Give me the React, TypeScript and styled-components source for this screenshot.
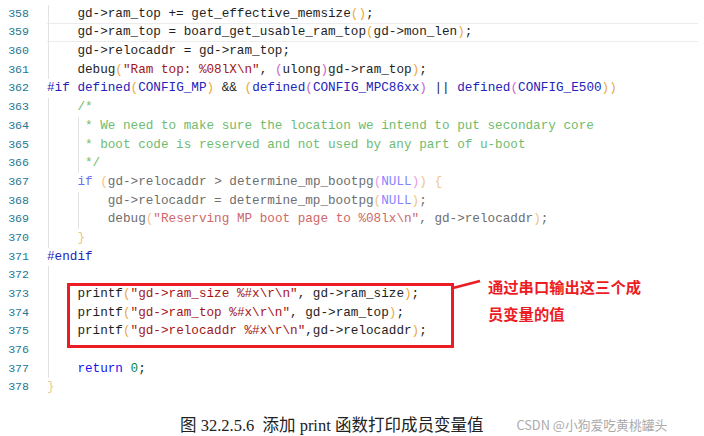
import React from "react";
import styled, { createGlobalStyle } from "styled-components";

const Global = createGlobalStyle`
  html, body { margin: 0; padding: 0; background: #ffffff; }
  body { width: 704px; height: 436px; overflow: hidden; }
`;

type Kind =
  | "t" | "kw" | "pp" | "str" | "num" | "p1" | "p2"
  | "cm" | "it" | "ikw" | "istr" | "inull" | "ip1" | "ip2" | "end";

const colors: Record<Kind, string> = {
  t: "#1e1e1e",
  kw: "#1414f0",
  pp: "#2323b8",
  str: "#a31515",
  num: "#098658",
  p1: "#e9a940",
  p2: "#cf62cf",
  cm: "#6fbb6f",
  it: "#6e6e6e",
  ikw: "#6f6ff0",
  istr: "#cf6767",
  inull: "#8585ff",
  ip1: "#f0c48a",
  ip2: "#e79be7",
  end: "#e4d197",
};

type Tok = [string, Kind];
interface Line {
  n: number;
  toks: Tok[];
  guides: number[];
  current?: boolean;
}

const lines: Line[] = [
  { n: 358, guides: [0], toks: [["    gd->ram_top += get_effective_memsize", "t"], ["()", "p1"], [";", "t"]] },
  { n: 359, guides: [0], current: true, toks: [["    gd->ram_top = board_get_usable_ram_top", "t"], ["(", "p1"], ["gd->mon_len", "t"], [")", "p1"], [";", "t"]] },
  { n: 360, guides: [0], toks: [["    gd->relocaddr = gd->ram_top;", "t"]] },
  { n: 361, guides: [0], toks: [["    debug", "t"], ["(", "p1"], ["\"Ram top: %08lX\\n\"", "str"], [", ", "t"], ["(", "p2"], ["ulong", "t"], [")", "p2"], ["gd->ram_top", "t"], [")", "p1"], [";", "t"]] },
  { n: 362, guides: [], toks: [["#if defined", "pp"], ["(", "p1"], ["CONFIG_MP", "pp"], [")", "p1"], [" && ", "t"], ["(", "p1"], ["defined", "pp"], ["(", "p2"], ["CONFIG_MPC86xx", "pp"], [")", "p2"], [" || ", "t"], ["defined", "pp"], ["(", "p2"], ["CONFIG_E500", "pp"], ["))", "p1"]] },
  { n: 363, guides: [0], toks: [["    /*", "cm"]] },
  { n: 364, guides: [0, 4], toks: [["     * We need to make sure the location we intend to put secondary core", "cm"]] },
  { n: 365, guides: [0, 4], toks: [["     * boot code is reserved and not used by any part of u-boot", "cm"]] },
  { n: 366, guides: [0, 4], toks: [["     */", "cm"]] },
  { n: 367, guides: [0], toks: [["    ", "it"], ["if", "ikw"], [" ", "it"], ["(", "ip1"], ["gd->relocaddr > determine_mp_bootpg", "it"], ["(", "ip2"], ["NULL", "inull"], [")", "ip2"], [")", "ip1"], [" ", "it"], ["{", "ip1"]] },
  { n: 368, guides: [0, 4], toks: [["        gd->relocaddr = determine_mp_bootpg", "it"], ["(", "ip1"], ["NULL", "inull"], [")", "ip1"], [";", "it"]] },
  { n: 369, guides: [0, 4], toks: [["        debug", "it"], ["(", "ip1"], ["\"Reserving MP boot page to %08lx\\n\"", "istr"], [", gd->relocaddr", "it"], [")", "ip1"], [";", "it"]] },
  { n: 370, guides: [0], toks: [["    ", "it"], ["}", "ip1"]] },
  { n: 371, guides: [], toks: [["#endif", "pp"]] },
  { n: 372, guides: [0], toks: [] },
  { n: 373, guides: [0], toks: [["    printf", "t"], ["(", "p1"], ["\"gd->ram_size %#x\\r\\n\"", "str"], [", gd->ram_size", "t"], [")", "p1"], [";", "t"]] },
  { n: 374, guides: [0], toks: [["    printf", "t"], ["(", "p1"], ["\"gd->ram_top %#x\\r\\n\"", "str"], [", gd->ram_top", "t"], [")", "p1"], [";", "t"]] },
  { n: 375, guides: [0], toks: [["    printf", "t"], ["(", "p1"], ["\"gd->relocaddr %#x\\r\\n\"", "str"], [",gd->relocaddr", "t"], [")", "p1"], [";", "t"]] },
  { n: 376, guides: [0], toks: [] },
  { n: 377, guides: [0], toks: [["    ", "t"], ["return", "kw"], [" ", "t"], ["0", "num"], [";", "t"]] },
  { n: 378, guides: [], toks: [["}", "end"]] },
];

const CH = 7.6;

const Page = styled.div`
  width: 704px;
  height: 436px;
  display: flex;
  flex-direction: column;
  position: relative;
  background: #fff;
`;

const Editor = styled.div`
  display: flex;
  flex-direction: column;
  padding-top: 4.7px;
  font-family: "Liberation Mono", "DejaVu Sans Mono", monospace;
`;

const Row = styled.div`
  display: grid;
  grid-template-columns: 47px 1fr;
  height: 18.7px;
`;

const LineNo = styled.div`
  color: #237893;
  font-size: 11.6px;
  line-height: 18.7px;
  text-align: right;
  padding-right: 18px;
`;

const CodeCell = styled.div<{ $current?: boolean }>`
  position: relative;
  font-size: 12.67px;
  white-space: pre;
  margin-right: 6px;
  box-sizing: border-box;
  border-top: 1px solid ${(p) => (p.$current ? "#ececec" : "transparent")};
  border-bottom: 1px solid ${(p) => (p.$current ? "#ececec" : "transparent")};
  line-height: 16.7px;
`;

const Guide = styled.span`
  position: absolute;
  top: -1px;
  bottom: -1px;
  width: 1px;
  background: #e2e2e2;
`;

const Tk = styled.span<{ $k: Kind }>`
  color: ${(p) => colors[p.$k]};
`;

const Callout = styled.div`
  position: absolute;
  left: 67px;
  top: 283px;
  width: 387px;
  height: 65px;
  box-sizing: border-box;
  border: 3px solid #ec1c24;
`;

const Pointer = styled.svg`
  position: absolute;
  left: 450px;
  top: 276px;
  overflow: visible;
`;

const Note = styled.div`
  position: absolute;
  left: 488px;
  top: 273px;
  display: flex;
  flex-direction: column;
  font-family: "Noto Sans CJK SC", "Noto Sans", sans-serif;
  font-weight: 700;
  font-size: 15.3px;
  line-height: 27px;
  color: #ec1c24;
  white-space: nowrap;
`;

const Footer = styled.div`
  display: flex;
  align-items: center;
  margin-top: 15px;
  height: 24px;
`;

const Caption = styled.div`
  margin-left: 180px;
  font-family: "Liberation Serif", "Noto Sans CJK SC", serif;
  font-size: 16.5px;
  color: #222;
  white-space: pre;
`;

const Watermark = styled.div`
  margin-left: 33px;
  font-family: "Noto Sans CJK SC", "Noto Sans", sans-serif;
  font-size: 12.8px;
  color: #ababab;
  white-space: pre;
`;

export default function App() {
  return (
    <>
      <Global />
      <Page>
        <Editor>
          {lines.map((l) => (
            <Row key={l.n}>
              <LineNo>{l.n}</LineNo>
              <CodeCell $current={l.current}>
                {l.guides.map((g) => (
                  <Guide key={g} style={{ left: `${g * CH + 0.5}px` }} />
                ))}
                {l.toks.map((t, i) => (
                  <Tk key={i} $k={t[1]}>
                    {t[0]}
                  </Tk>
                ))}
              </CodeCell>
            </Row>
          ))}
        </Editor>
        <Callout />
        <Pointer width="32" height="14">
          <line x1="3" y1="12" x2="30" y2="5" stroke="#ec1c24" strokeWidth="2.6" />
        </Pointer>
        <Note>
          <span>通过串口输出这三个成</span>
          <span>员变量的值</span>
        </Note>
        <Footer>
          <Caption>图 32.2.5.6  添加 print 函数打印成员变量值</Caption>
          <Watermark>CSDN @小狗爱吃黄桃罐头</Watermark>
        </Footer>
      </Page>
    </>
  );
}
